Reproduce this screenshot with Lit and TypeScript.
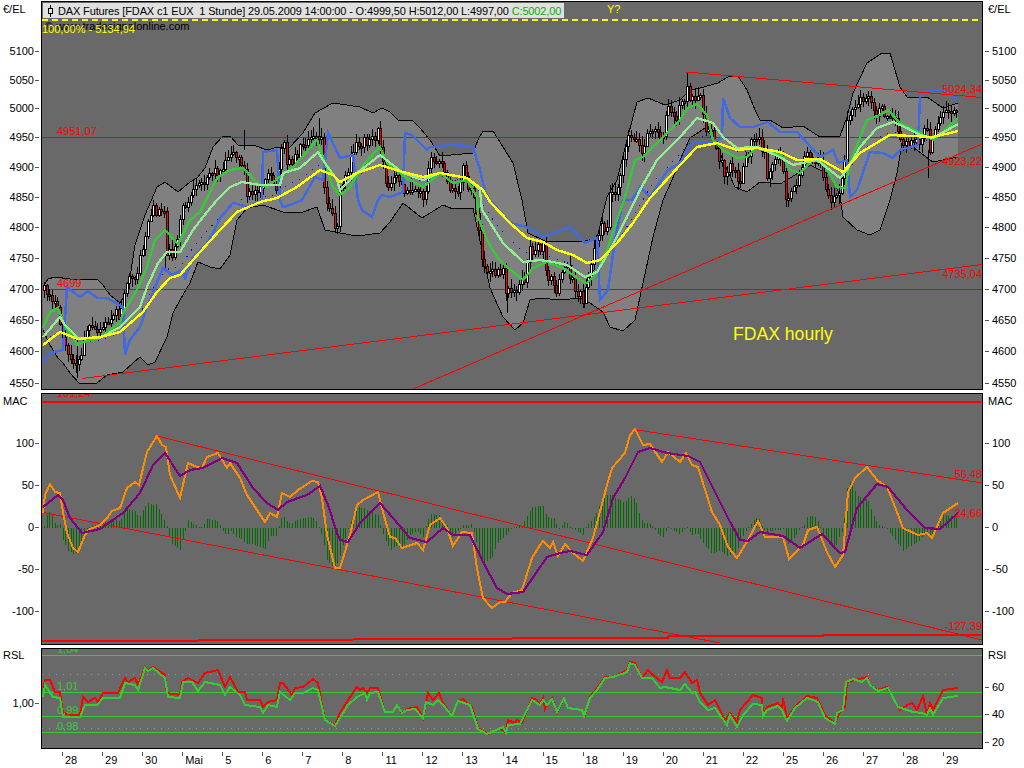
import { LitElement, html, css, svg } from 'lit';
import { customElement } from 'lit/decorators.js';

const W = 942;

// price pane, all points are page pixels
const BAND_UP = "43,287 48,279 55,277 70,279 97,279 103,285 110,295 120,303 128,290 135,245 145,215 157,187 165,182 178,192 190,182 197,178 205,168 213,147 222,137 230,136 238,145 253,145 267,150 278,147 290,147 303,133 315,113 333,103 340,104 360,107 373,113 382,108 390,112 398,120 412,120 420,128 430,140 440,156 473,153 478,140 483,131 493,131 503,147 513,163 522,200 525,217 528,233 545,241 564,241 585,241 597,238 607,197 617,180 627,140 637,102 648,98 665,105 680,100 690,90 700,88 718,83 728,77 738,76 747,90 755,110 760,120 770,120 783,128 803,126 820,137 840,136 847,117 853,93 867,63 882,53 890,53 900,87 907,97 927,97 943,108 958,103";
const BAND_DN = "43,330 50,345 58,358 63,363 70,373 80,384 97,383 107,375 123,372 133,363 140,357 148,365 155,362 167,337 173,313 180,300 190,283 198,262 210,267 220,269 230,255 237,220 247,208 263,205 283,212 300,213 317,207 325,230 340,233 357,236 380,233 390,222 403,203 422,218 443,205 453,209 473,208 482,250 490,288 503,317 515,330 523,323 530,300 540,298 560,300 580,298 590,303 603,312 610,327 623,331 635,320 643,283 653,237 663,200 672,180 680,160 690,138 705,128 715,140 725,165 735,187 747,192 760,182 780,184 795,175 810,165 830,175 840,195 843,217 857,230 870,235 880,230 890,200 897,173 902,143 913,147 933,162 958,157";
const CLOSE = "44,290 50,292 55,305 63,335 67,358 80,362 83,347 86,328 97,333 107,323 113,310 120,317 125,280 132,282 138,268 143,247 147,222 153,210 165,210 167,250 173,255 182,210 192,195 202,183 207,173 220,170 230,150 237,157 243,163 247,197 257,187 267,177 270,177 277,197 280,147 285,145 287,163 293,160 300,147 310,133 318,132 322,140 325,203 330,210 337,227 340,187 347,173 355,145 363,142 373,137 378,133 385,167 387,190 398,177 403,190 412,187 420,187 425,200 428,163 440,160 448,187 457,197 462,163 468,187 475,200 477,217 482,260 488,273 503,273 507,293 523,283 530,250 543,247 547,273 557,290 567,260 573,287 583,300 592,260 597,233 607,223 607,195 617,188 627,137 633,133 642,153 650,128 662,137 668,107 675,118 683,100 687,88 693,103 700,100 707,130 713,137 725,175 730,160 740,183 752,137 760,133 767,173 780,157 787,200 793,193 807,150 820,163 827,197 837,197 843,173 847,120 853,110 867,93 873,113 880,110 893,113 900,143 918,143 927,127 928,153 937,127 943,113 958,108";
const BLUE = "43,362 50,353 63,350 67,287 80,297 88,291 97,298 107,298 123,307 125,355 130,340 140,327 147,307 163,268 172,275 182,270 185,278 193,257 207,243 213,233 220,218 233,203 248,207 262,200 263,152 277,150 280,200 283,207 290,205 302,200 315,177 323,180 328,133 340,158 353,155 358,200 362,210 372,217 378,200 382,195 390,197 403,192 405,133 412,135 427,150 430,147 443,147 448,144 473,147 480,170 483,183 488,200 493,203 510,223 527,227 543,237 570,227 585,243 597,238 600,300 608,290 615,240 623,200 632,200 640,187 650,197 668,170 680,163 693,142 710,143 722,138 723,98 730,118 740,127 753,127 768,122 780,132 797,132 820,157 833,150 838,163 847,160 850,197 857,190 870,152 883,153 893,158 900,150 918,145 920,97 928,90 943,90 958,100";
const GREEN = "43,328 50,312 58,308 65,327 78,345 83,342 100,338 120,322 123,313 138,288 147,267 155,240 165,230 178,244 190,220 200,212 207,198 218,177 230,170 243,168 257,183 267,187 282,175 293,167 317,140 323,157 333,187 340,195 350,187 363,165 380,147 387,163 405,177 423,187 440,173 453,183 467,180 477,197 478,217 487,240 497,257 507,267 523,280 533,268 547,262 563,268 580,280 587,283 597,273 607,250 617,220 625,197 635,160 643,157 660,140 680,120 687,108 697,104 707,115 713,140 723,150 737,158 747,157 757,147 777,153 783,157 790,170 800,173 813,160 823,163 837,187 845,188 850,163 867,120 880,115 888,110 900,123 910,128 920,133 933,140 943,132 958,118";
const LIGHT = "43,337 60,317 65,325 78,338 100,338 120,327 140,307 147,287 158,263 167,252 180,252 193,230 203,217 217,200 230,187 242,182 260,185 280,185 283,173 300,168 318,152 325,163 337,180 340,190 357,173 380,155 403,173 423,180 440,173 467,178 480,190 482,210 503,243 523,262 540,260 553,262 567,265 585,277 597,272 610,250 627,217 640,190 657,160 680,137 697,118 713,123 723,137 737,148 757,147 780,157 793,165 817,160 840,178 847,170 860,147 877,128 893,122 907,128 920,135 933,138 958,124";
const YELLOW = "43,345 60,332 78,339 100,337 120,332 143,312 157,292 170,278 180,275 200,252 220,230 237,212 260,202 277,198 297,187 320,170 333,175 340,182 357,173 380,165 403,172 423,177 440,173 467,178 483,190 490,202 510,223 527,238 543,242 557,250 573,255 587,263 600,260 617,243 633,223 650,198 680,165 697,147 717,143 737,150 757,148 780,152 797,160 820,159 843,172 860,153 890,135 913,136 933,137 958,131";
const WICKS = [[687, 72, 90], [928, 150, 178], [507, 290, 313], [319, 118, 135], [584, 290, 308], [244, 130, 150], [77, 340, 378], [165, 255, 270]];

// MACD pane
const ORANGE = "43,513 45,495 50,484 55,492 60,493 63,512 67,533 73,548 78,552 85,535 90,529 100,525 107,518 112,511 120,508 127,488 135,482 139,485 147,452 157,436 162,445 166,447 170,475 180,498 188,463 197,467 202,468 207,457 218,453 227,468 230,463 240,478 247,495 257,510 265,522 270,513 277,517 282,493 290,497 298,490 312,481 318,482 322,498 327,535 335,568 340,568 350,535 357,505 363,500 378,492 383,512 390,537 395,538 402,548 417,543 423,550 430,525 440,518 447,528 453,546 462,532 472,533 477,568 483,598 492,608 500,602 505,602 512,593 522,590 532,558 540,545 543,541 550,548 553,542 558,556 565,544 573,553 583,561 593,538 607,485 612,468 625,453 630,435 635,429 643,445 650,444 662,462 668,452 680,462 686,453 692,465 698,467 712,512 720,525 728,547 737,558 748,540 758,521 765,537 783,537 789,559 803,545 808,530 817,527 827,552 835,567 843,555 848,492 855,478 867,467 877,480 887,487 897,512 903,528 918,535 927,533 932,538 943,513 958,503";
const PURPLE = "43,507 58,495 63,500 70,518 82,533 100,529 110,522 123,513 140,493 153,465 165,453 180,476 190,470 203,468 222,458 237,463 253,488 267,503 278,510 287,502 307,495 320,486 328,505 337,533 340,540 348,542 360,523 380,503 393,518 410,538 427,542 443,528 453,535 470,535 483,562 497,588 507,594 523,592 547,557 560,553 570,551 587,555 603,532 613,498 625,478 638,452 650,448 667,453 688,456 700,462 713,488 730,522 740,540 748,541 760,532 783,536 800,548 822,534 840,553 845,552 857,508 877,484 888,487 907,510 925,528 940,529 958,513";
const FLOOR = "42,640.5 198,640.5 199,639.5 353,639.5 354,638.5 512,638.5 513,637.5 668,637.5 669,636 823,636 824,635 982,635";

// RSL pane
const RSL_RED = "43,688 45,680 50,680 55,692 60,692 63,713 73,715 80,715 83,697 88,702 95,698 98,702 103,693 118,693 125,678 128,682 135,678 138,685 145,667 148,670 153,667 165,675 167,693 180,695 182,682 188,678 198,683 205,673 218,670 225,687 230,677 238,692 245,692 247,700 260,700 263,707 268,702 277,700 280,683 283,683 292,695 295,688 303,687 313,679 318,683 325,720 335,725 340,713 350,697 357,687 360,690 363,688 367,693 370,688 378,688 385,712 393,712 397,705 402,713 407,709 417,707 423,718 428,693 433,700 439,693 443,703 452,716 458,701 463,699 472,707 478,728 488,734 500,728 506,733 508,720 515,723 517,720 522,723 532,698 537,700 540,705 543,698 545,709 552,698 557,713 564,698 568,708 582,710 585,715 590,697 597,688 605,677 613,677 627,670 630,662 635,663 642,678 648,670 653,675 662,682 667,670 670,678 680,678 685,672 692,683 697,680 700,693 708,705 715,700 725,720 730,713 737,722 740,710 753,695 762,698 763,715 767,707 778,703 782,710 783,698 787,718 795,707 807,696 817,698 825,715 835,723 840,712 845,707 847,682 863,678 867,677 870,685 878,690 887,687 900,710 907,705 912,703 917,710 923,696 927,715 930,703 933,710 943,690 958,688";
const RSL_GREEN = "43,697 45,685 53,697 60,698 63,717 80,717 85,705 97,705 103,698 120,698 125,683 135,685 138,690 145,668 148,671 153,668 165,678 168,697 180,698 183,682 192,682 198,691 205,682 220,685 225,695 230,687 240,695 245,705 260,707 263,713 268,705 277,707 280,692 290,700 295,693 303,693 313,688 318,690 325,720 335,726 340,718 348,705 357,697 365,693 367,700 370,693 378,692 385,712 393,712 397,705 402,713 407,710 415,709 423,718 426,702 433,705 438,700 443,705 452,716 458,701 470,705 478,729 487,734 503,727 506,733 508,725 520,724 532,700 540,705 543,700 547,705 552,699 557,712 564,698 568,708 582,710 584,716 590,698 597,690 605,678 613,677 627,672 630,663 635,665 642,678 652,678 660,688 665,687 670,688 680,690 685,684 692,693 695,692 700,702 708,710 715,708 727,725 730,715 737,727 743,715 753,704 762,705 763,716 767,710 778,706 782,710 787,721 795,708 807,698 818,702 825,718 835,724 837,713 843,710 846,682 853,679 862,682 867,678 870,685 878,691 888,688 898,707 913,712 922,713 927,715 930,708 933,715 943,698 958,696";

const DAYS = ["28", "29", "30", "Mai", "5", "6", "7", "8", "11", "12", "13", "14", "15", "18", "19", "20", "21", "22", "25", "26", "27", "28", "29"];

function parse(s: string) {
  return s.split(" ").map((p) => p.split(",").map(Number));
}

function at(pts: number[][], x: number) {
  for (let i = 1; i < pts.length; i++) {
    if (x <= pts[i][0]) {
      const [x0, y0] = pts[i - 1];
      const [x1, y1] = pts[i];
      if (x1 === x0) return y1;
      return y0 + ((y1 - y0) * (x - x0)) / (x1 - x0);
    }
  }
  return pts[pts.length - 1][1];
}

function candles() {
  const path = parse(CLOSE);
  let seed = 17;
  const rnd = () => {
    seed = (seed * 16807) % 2147483647;
    return seed / 2147483647;
  };
  let wicks = WICKS.map(([x, a, b]) => `M${x + 0.5} ${a}V${b}`).join("");
  const up: any[] = [];
  const down: any[] = [];
  let prev = at(path, 44);
  for (let i = 0; i < 343; i++) {
    const x = Math.round(44 + i * 2.668);
    const c = at(path, x) + (rnd() - 0.5) * 11;
    const top = Math.round(Math.min(prev, c));
    const bot = Math.max(Math.round(Math.max(prev, c)), top + 2);
    wicks += `M${x + 0.5} ${top - 1 - Math.round(rnd() * 8)}V${bot + 1 + Math.round(rnd() * 8)}`;
    const r = svg`<rect x=${x - 0.5} y=${top + 0.5} width="2" height=${bot - top} stroke="#000" fill=${c < prev ? "#fff" : "#f00"}></rect>`;
    (c < prev ? up : down).push(r);
    prev = c;
  }
  return svg`<path d=${wicks} stroke="#000" fill="none"></path>${up}${down}`;
}

function dots() {
  const a = parse(LIGHT);
  const b = parse(YELLOW);
  const out: string[] = [];
  for (let x = 50; x < 950; x += 4) out.push(`${x},${Math.round((at(a, x) + at(b, x)) / 2 + 3)}`);
  return out.join(" ");
}

function histogram() {
  const o = parse(ORANGE);
  const p = parse(PURPLE);
  let d = "";
  for (let i = 0; i < 343; i++) {
    const x = Math.round(44 + i * 2.668);
    const h = Math.round(at(p, x) - at(o, x));
    d += `M${x + 0.5} 527.5V${527.5 - h + (h === 0 ? 1 : 0)}`;
  }
  return d;
}

function line(points: string, color: string, width = 2) {
  return svg`<polyline points=${points} fill="none" stroke=${color} stroke-width=${width}></polyline>`;
}

function seg(x1: number, y1: number, x2: number, y2: number, color = "#f00") {
  return svg`<line x1=${x1} y1=${y1} x2=${x2} y2=${y2} stroke=${color}></line>`;
}

function label(x: number, y: number, text: string, fill: string, end = false) {
  return svg`<text x=${x} y=${y} fill=${fill} text-anchor=${end ? "end" : "start"}>${text}</text>`;
}

function axis(side: "l" | "r", top: number, h: number, title: string, ty: number, ticks: [string, number][]) {
  const left = side === "l";
  return svg`<svg class="axis" viewBox="${left ? 0 : 983} ${top} 41 ${h}" width="41" height=${h} shape-rendering="crispEdges">
    ${label(left ? 3 : 988, ty, title, "#000")}
    ${ticks.map(([t, y]) => svg`
      ${seg(left ? 35 : 985, y + 0.5, left ? 39 : 989, y + 0.5, "#555")}
      ${label(left ? 34 : 992, y + 4, t, "#000", left)}`)}
  </svg>`;
}

const PRICE_TICKS: [string, number][] = [["5100", 51], ["5050", 80], ["5000", 108], ["4950", 137], ["4900", 167], ["4850", 197], ["4800", 227], ["4750", 258], ["4700", 289], ["4650", 320], ["4600", 351], ["4550", 383]];
const MAC_TICKS: [string, number][] = [["100", 443], ["50", 485], ["0", 527], ["-50", 569], ["-100", 611]];

@customElement("app-root")
export class AppRoot extends LitElement {
  static styles = css`
    :host {
      display: block;
      width: 1024px;
      height: 768px;
      background: #fff;
      overflow: hidden;
      font-family: "Liberation Sans", Arial, sans-serif;
      font-size: 11px;
      color: #000;
    }
    .page {
      display: flex;
      flex-direction: column;
      gap: 3px;
      padding-top: 1px;
    }
    .pane {
      display: grid;
      grid-template-columns: 41px ${W}px 41px;
    }
    svg {
      display: block;
      font-family: "Liberation Sans", Arial, sans-serif;
      font-size: 11px;
    }
    .plot {
      position: relative;
      background: #696969;
    }
    .frame {
      fill: none;
      stroke: #000;
    }
    .big {
      font-size: 17.6px;
    }
    .title {
      position: absolute;
      left: 2px;
      top: 2px;
      width: 521px;
      height: 15px;
      box-sizing: border-box;
      padding-left: 4px;
      display: flex;
      align-items: center;
      gap: 4px;
      background: #e0e0e0;
      white-space: pre;
      font-size: 11px;
      letter-spacing: -0.14px;
    }
    .icon {
      flex: none;
    }
    .close {
      color: #00b000;
    }
    .days {
      display: flex;
      margin-top: -3px;
      padding-left: 62px;
      height: 19px;
    }
    .day {
      width: 40.05px;
      flex: none;
      padding: 4px 0 0 3px;
      box-sizing: border-box;
      font-size: 11px;
      line-height: 14px;
      position: relative;
    }
    .day::before {
      content: "";
      position: absolute;
      left: 0;
      top: 3px;
      width: 1px;
      height: 4px;
      background: #555;
    }
  `;

  private mainPlot() {
    const band = BAND_UP + " " + BAND_DN.split(" ").reverse().join(" ");
    return svg`<svg viewBox="41 1 ${W} 389" width=${W} height="389" shape-rendering="crispEdges">
      <polygon points=${band} fill="#808080"></polygon>
      ${line(BAND_UP, "#000", 1)}
      ${line(BAND_DN, "#000", 1)}
      ${seg(42, 137.5, 982, 137.5, "#e60000")}
      ${seg(42, 289.5, 982, 289.5, "#e60000")}
      ${candles()}
      <polyline points=${dots()} fill="none" stroke="#0000ff" stroke-dasharray="1 7"></polyline>
      ${line(BLUE, "#4169e1", 2.5)}
      ${line(GREEN, "#32cd32", 2.3)}
      ${line(LIGHT, "#90ee90", 2.3)}
      ${line(YELLOW, "#ffff00", 2.4)}
      ${seg(686, 72, 982, 97.5)}
      ${seg(82, 378.5, 982, 264.5)}
      ${seg(413, 389, 982, 144)}
      <line x1="42" y1="20" x2="982" y2="20" stroke="#ffff00" stroke-width="1.5" stroke-dasharray="6 4"></line>
      ${label(45, 30, "© www.tradesignalonline.com", "#000")}
      ${label(42, 33, "100,00% - 5134,94", "#ffff00")}
      ${label(607, 13, "Y?", "#ffff00")}
      ${label(57, 135, "4951,07", "#f00")}
      ${label(57, 287, "4699", "#f00")}
      ${label(982, 93, "5024,34", "#f00", true)}
      ${label(982, 165, "4923,22", "#f00", true)}
      ${label(982, 278, "4735,04", "#f00", true)}
      <text class="big" x="733" y="340" fill="#ffff00">FDAX hourly</text>
      <rect class="frame" x="41.5" y="1.5" width="941" height="388"></rect>
    </svg>`;
  }

  private macPlot() {
    return svg`<svg viewBox="41 393 ${W} 252" width=${W} height="252" shape-rendering="crispEdges">
      <line x1="42" y1="402" x2="982" y2="402" stroke="#f00" stroke-width="1.5"></line>
      <path d=${histogram()} stroke="#006e00" fill="none"></path>
      ${seg(157, 436, 982, 640)}
      ${seg(43, 512.5, 720, 643)}
      ${seg(637, 430, 982, 483)}
      ${line(FLOOR, "#f00", 2)}
      ${line(ORANGE, "#ff8c00")}
      ${line(PURPLE, "#800080", 2.2)}
      ${label(57, 397, "131,24", "#f00")}
      ${label(982, 478, "56,48", "#f00", true)}
      ${label(982, 517, "24,66", "#f00", true)}
      ${label(982, 630, "-127,39", "#f00", true)}
      <rect class="frame" x="41.5" y="393.5" width="941" height="251"></rect>
    </svg>`;
  }

  private rslPlot() {
    const g = "#32cd32";
    return svg`<svg viewBox="41 648 ${W} 101" width=${W} height="101" shape-rendering="crispEdges">
      <line x1="42" y1="674.5" x2="955" y2="674.5" stroke="#9a9a9a" stroke-dasharray="1 6"></line>
      <line x1="42" y1="728.5" x2="955" y2="728.5" stroke="#9a9a9a" stroke-dasharray="1 6"></line>
      ${seg(42, 655.5, 982, 655.5, g)}
      ${seg(42, 692.5, 982, 692.5, g)}
      ${seg(42, 716.5, 982, 716.5, g)}
      ${seg(42, 732.5, 982, 732.5, g)}
      ${line(RSL_RED, "#f00", 2)}
      ${line(RSL_GREEN, g, 2)}
      ${label(57, 653, "1,04", g)}
      ${label(57, 690, "1,01", g)}
      ${label(57, 714, "0,99", g)}
      ${label(57, 730, "0,98", g)}
      <rect class="frame" x="41.5" y="648.5" width="941" height="100"></rect>
    </svg>`;
  }

  render() {
    return html`
      <div class="page">
        <div class="pane">
          ${axis("l", 1, 389, "€/EL", 13, PRICE_TICKS)}
          <div class="plot">
            ${this.mainPlot()}
            <div class="title">
              <svg class="icon" width="7" height="12" viewBox="0 0 7 12" shape-rendering="crispEdges">
                <path d="M3.5 0V3M3.5 9V12" stroke="#000"></path>
                <rect x="1.5" y="3.5" width="4" height="5" fill="none" stroke="#000"></rect>
              </svg>
              <span>DAX Futures [FDAX c1 EUX  1 Stunde] 29.05.2009 14:00:00 - O:4999,50 H:5012,00 L:4997,00 <span class="close">C:5002,00</span></span>
            </div>
          </div>
          ${axis("r", 1, 389, "€/EL", 13, PRICE_TICKS)}
        </div>
        <div class="pane">
          ${axis("l", 393, 252, "MAC", 405, MAC_TICKS)}
          <div class="plot">${this.macPlot()}</div>
          ${axis("r", 393, 252, "MAC", 405, MAC_TICKS)}
        </div>
        <div class="pane">
          ${axis("l", 648, 101, "RSL", 659, [["1,00", 703]])}
          <div class="plot">${this.rslPlot()}</div>
          ${axis("r", 648, 101, "RSI", 659, [["60", 687], ["40", 714], ["20", 742]])}
        </div>
        <div class="days">
          ${DAYS.map((d) => html`<div class="day">${d}</div>`)}
        </div>
      </div>
    `;
  }
}
